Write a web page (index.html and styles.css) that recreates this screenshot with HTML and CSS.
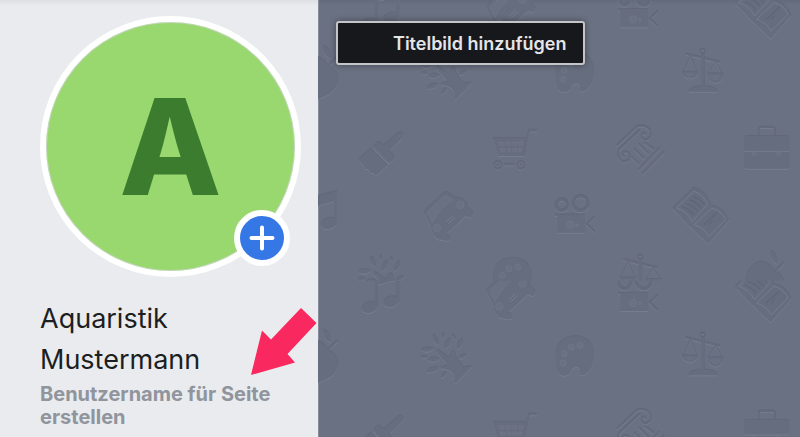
FILE: index.html
```html
<!DOCTYPE html>
<html lang="de">
<head>
    <meta charset="UTF-8">
    <title>Aquaristik Mustermann</title>
    <meta name="viewport" content="width=device-width, initial-scale=1.0">
    <link rel="stylesheet" href="styles.css">
</head>
<body>
<div class="page">
    <aside class="sidebar">
        <div class="avatar">
            <span class="avatar-letter">A</span>
            <button class="avatar-add" aria-label="Profilbild hinzufügen">
                <svg width="26" height="26" viewBox="0 0 26 26">
                    <path d="M13 2.500V23.500M2.500 13H23.500" stroke="#fff" stroke-width="4" stroke-linecap="round"/>
                </svg>
            </button>
        </div>
        <h1>Aquaristik Mustermann</h1>
        <a class="username" href="#">Benutzername für Seite erstellen</a>
        <svg class="arrow" width="66" height="67" viewBox="0 0 66 67">
            <path d="M50 0L65.500 15L36.500 46L44 54.500L0 67L11 22.500L20 31.500Z" fill="#f9285f"/>
        </svg>
    </aside>

    <main class="cover">
        <svg class="pattern" viewBox="0 0 1446 1311" preserveAspectRatio="xMinYMin slice" aria-hidden="true">
            <defs>
                <!-- the pattern tile repeats at y = 842 -->
                <clipPath id="tile-top"><rect x="-100" y="-100" width="4000" height="942"/></clipPath>
                <clipPath id="tile-bottom"><rect x="-100" y="842" width="4000" height="3000"/></clipPath>

                <path id="leaf" d="M-19 0Q-4 -14 19 0Q0 14 -19 0Z"/>

                <g id="brush">
                    <path d="M166 109L176 98Q183 93 188 98L197 106L237 70Q247 63 254 70Q259 78 250 86L215 121L228 140Q230 148 224 152L214 158Z"/>
                    <path d="M120 150L159 115L208 165L174 197L166 189L157 189L152 178L142 176L136 164Z"/>
                    <circle class="hole" cx="245" cy="77" r="3"/>
                    <path class="line" d="M163 112L211 161"/>
                </g>

                <g id="cart">
                    <path class="thick" d="M657 62H633L617 138"/>
                    <path d="M524 84H626L616 138H541Z"/>
                    <path class="hole edge" d="M541 96H556L559 106H544ZM564 96H577V106H567ZM584 96H597L596 106H584ZM604 96H616L613 106H603ZM546 115H560L562 124H549ZM568 115H577V124H570ZM584 115H596L595 124H584ZM602 115H612L609 124H601Z"/>
                    <circle class="ring" cx="540" cy="166" r="11"/>
                    <circle class="ring" cx="609" cy="166" r="11"/>
                    <circle cx="540" cy="166" r="4"/>
                    <circle cx="609" cy="166" r="4"/>
                    <path class="thick" d="M559 164H589"/>
                </g>

                <g id="note">
                    <path d="M-17 262L57 242V340H48V274L-8 289V357H-17Z"/>
                    <ellipse cx="33" cy="340" rx="24" ry="16" transform="rotate(-15 33 340)"/>
                    <ellipse cx="-32" cy="357" rx="24" ry="16" transform="rotate(-15 -32 357)"/>
                </g>

                <g id="car">
                    <path d="M378 248Q386 243 394 250L412 263Q428 260 440 272Q452 283 450 293L465 308Q466 318 457 323L443 318L384 371Q398 379 396 388Q388 396 378 391L360 388Q342 378 340 352L320 314Q316 306 322 300Z"/>
                    <path class="hole edge" d="M328 307L380 257L405 269Q366 292 344 338Z"/>
                    <circle class="hole edge" cx="427" cy="285" r="11"/>
                    <circle class="hole edge" cx="357" cy="354" r="11"/>
                    <path class="line" d="M385 335L406 316M391 341L412 322"/>
                </g>

                <g id="camera">
                    <circle class="ring wide" cx="65" cy="285" r="17"/>
                    <circle class="ring wide" cx="122" cy="280" r="22"/>
                    <path d="M45 313H135V368H53V318H45Z"/>
                    <path class="ring" d="M164 320L140 343L164 365"/>
                    <circle class="hole edge" cx="90" cy="344" r="11"/>
                    <circle class="hole edge" cx="111" cy="345" r="4"/>
                </g>

                <g id="column">
                    <path class="ring" d="M230 107L290 50Q315 41 331 62Q337 84 318 90Q300 88 306 72Q313 66 318 75"/>
                    <path class="ring" d="M300 60L236 120Q228 140 247 155Q270 158 270 135Q262 120 249 128Q245 137 254 140"/>
                    <path class="thick" d="M274 140L298 164M283 117L311 145M296 102L327 132M312 97L343 119"/>
                    <path class="thick" d="M295 181L358 115M307 192L373 125"/>
                </g>

                <g id="briefcase">
                    <rect class="ring" x="656" y="52" width="49" height="30" rx="8"/>
                    <rect x="612" y="78" width="136" height="98" rx="8"/>
                    <path class="line" d="M612 124H748"/>
                    <circle class="hole edge" cx="642" cy="130" r="6"/>
                    <circle class="hole edge" cx="716" cy="130" r="6"/>
                </g>

                <g id="book">
                    <path d="M397 295L462 232Q500 244 513 285Q550 292 567 331L505 402L450 350Z"/>
                    <path class="line" d="M409 294L462 244Q490 254 503 283L456 334Q443 304 409 294ZM515 294Q544 301 557 329L506 380Q495 355 463 344Z"/>
                    <path class="text" d="M427 291Q448 296 461 315M437 280Q460 286 473 304M449 270Q470 276 484 294M460 260Q480 266 493 283M491 345L532 307M506 344L517 333"/>
                </g>

                <g id="scales">
                    <circle class="ring" cx="488" cy="286" r="7"/>
                    <path d="M483 294H494V388Q528 390 533 406H445Q450 390 483 388Z"/>
                    <path class="thick" d="M437 293L540 318"/>
                    <path class="ring thin" d="M450 300L430 348M452 300L471 348M526 318L506 352M528 318L546 352"/>
                    <path d="M425 346H474Q471 365 449 366Q428 364 425 346ZM502 351H551Q549 377 526 380Q505 377 502 351Z"/>
                    <path class="hole" d="M434 351H466Q460 361 449 361Q439 360 434 351ZM509 356H543Q538 372 526 374Q514 372 509 356Z"/>
                </g>

                <g id="palette">
                    <path d="M46 350Q46 292 108 288Q160 292 162 345Q160 392 130 406L121 404Q123 380 108 380Q97 382 90 400Q72 415 55 400Q46 380 46 350Z"/>
                    <circle class="hole edge" cx="120" cy="316" r="9"/>
                    <circle class="hole edge" cx="94" cy="321" r="9"/>
                    <circle class="hole edge" cx="73" cy="341" r="9"/>
                    <circle class="hole edge" cx="69" cy="369" r="9"/>
                </g>

                <g id="tree">
                    <path d="M357 328L393 352L401 334H410L415 352L436 380L464 377L412 430Q414 397 390 390L367 384L389 374L356 338Z"/>
                    <use href="#leaf" transform="translate(353 299) rotate(65)"/>
                    <use href="#leaf" transform="translate(376 286) rotate(90) scale(.500)"/>
                    <use href="#leaf" transform="translate(388 311) rotate(115)"/>
                    <use href="#leaf" transform="translate(408 291) rotate(60) scale(.500)"/>
                    <use href="#leaf" transform="translate(426 311) rotate(115)"/>
                    <use href="#leaf" transform="translate(434 349) rotate(-30) scale(.700)"/>
                    <use href="#leaf" transform="translate(328 328) rotate(-5)"/>
                    <use href="#leaf" transform="translate(319 351) scale(.600)"/>
                    <use href="#leaf" transform="translate(348 358) rotate(-5)"/>
                    <use href="#leaf" transform="translate(344 389) rotate(-20)"/>
                    <use href="#leaf" transform="translate(378 404) rotate(-50) scale(.700)"/>
                </g>

                <g id="apple">
                    <path d="M-60 360Q-50 302 -10 300Q15 303 30 327Q62 348 62 375Q50 415 0 427Q-60 420 -60 360Z"/>
                    <use href="#leaf" transform="translate(27 287) rotate(62) scale(1.200)"/>
                    <path class="thick" d="M34 326L58 302"/>
                </g>
            </defs>

            <g clip-path="url(#tile-top)">
                <use class="icon" href="#note" x="187" y="-286"/>
                <use class="icon" href="#car" x="187" y="-286"/>
                <use class="icon" href="#camera" x="855" y="-286"/>
                <use class="icon" href="#book" x="853" y="-286"/>
                <use class="icon" href="#apple" y="-131"/>
                <use class="icon" href="#tree" y="-131"/>
                <use class="icon" href="#palette" x="666" y="-131"/>
                <use class="icon" href="#scales" x="666" y="-131"/>
                <use class="icon" href="#brush" y="330"/>
                <use class="icon" href="#cart" y="330"/>
                <use class="icon" href="#column" x="666" y="330"/>
                <use class="icon" href="#briefcase" x="666" y="330"/>
                <use class="icon" href="#note" y="330"/>
                <use class="icon" href="#car" y="330"/>
                <use class="icon" href="#camera" x="666" y="330"/>
                <use class="icon" href="#book" x="666" y="330"/>
                <use class="icon" href="#tree" x="-188" y="486"/>
                <use class="icon" href="#palette" x="479" y="485"/>
                <use class="icon" href="#scales" x="479" y="486"/>
                <use class="icon" href="#apple" x="1341" y="485"/>
            </g>

            <g clip-path="url(#tile-bottom)">
                <use class="icon" href="#note" x="187" y="565"/>
                <use class="icon" href="#car" x="187" y="565"/>
                <use class="icon" href="#camera" x="855" y="565"/>
                <use class="icon" href="#book" x="853" y="565"/>
                <use class="icon" href="#apple" y="720"/>
                <use class="icon" href="#tree" y="720"/>
                <use class="icon" href="#palette" x="666" y="720"/>
                <use class="icon" href="#scales" x="666" y="720"/>
                <use class="icon" href="#brush" y="1181"/>
                <use class="icon" href="#cart" y="1181"/>
                <use class="icon" href="#column" x="666" y="1181"/>
                <use class="icon" href="#briefcase" x="666" y="1181"/>
            </g>
        </svg>
        <button class="cover-button">Titelbild hinzufügen</button>
    </main>
</div>
</body>
</html>
```

FILE: styles.css
```css
* {
    box-sizing: border-box;
}

body {
    margin: 0;
    font-family: Inter, "Liberation Sans", Arial, sans-serif;
    background: #e9ebee;
    color: #1c1e21;
}

.page {
    display: flex;
    min-height: 100vh;
    overflow: hidden;
}

.sidebar {
    position: relative;
    flex: 0 0 318px;
    padding: 16px 16px 8px 40px;
    background: linear-gradient(#dddfe2 0, #e9ebee 6px);
}

.avatar {
    position: relative;
    display: flex;
    align-items: center;
    justify-content: center;
    width: 261px;
    height: 261px;
    border: 6px solid #fff;
    border-radius: 50%;
    background: #98d86f;
    box-shadow: inset 0 0 0 1px #c9d3c6;
}

.avatar-letter {
    color: #3b7c2f;
    font-size: 133px;
    font-weight: 800;
    line-height: 1;
}

.avatar-add {
    position: absolute;
    right: 5px;
    bottom: 5px;
    display: flex;
    align-items: center;
    justify-content: center;
    width: 56px;
    height: 56px;
    padding: 0;
    border: 6px solid #fff;
    border-radius: 50%;
    background: #3578e5;
    cursor: pointer;
}

h1 {
    margin: 21px 0 0;
    font-size: 27px;
    font-weight: 400;
    line-height: 41px;
}

.username {
    display: block;
    margin-top: 3px;
    color: #90949c;
    font-size: 20px;
    font-weight: 700;
    line-height: 23px;
    text-decoration: none;
}

.arrow {
    position: absolute;
    top: 308px;
    right: 1px;
}

.cover {
    position: relative;
    flex: 1;
    padding: 21px 17px;
    border-left: 1px solid #868b99;
    background: linear-gradient(#636a7b 0, #6a7182 5px);
}

.pattern {
    position: absolute;
    top: 0;
    left: -1px;
    width: calc(100% + 1px);
    height: 100%;
}

.icon {
    fill: #666d7e;
    stroke: none;
    filter: drop-shadow(0 -2px 0 #5e6576) drop-shadow(0 3px 0 #767d8e);
}

.hole {
    fill: #6a7182;
}

.hole.edge {
    stroke: #727989;
    stroke-width: 2;
}

.line {
    fill: none;
    stroke: #757c8d;
    stroke-width: 3;
}

.text {
    fill: none;
    stroke: #5f6677;
    stroke-width: 4;
}

.ring {
    fill: none;
    stroke: #646b7c;
    stroke-width: 4;
}

.ring.wide {
    stroke-width: 8;
}

.ring.thin {
    stroke-width: 2;
}

.thick {
    fill: none;
    stroke: #666d7e;
    stroke-width: 5;
}

.cover-button {
    position: relative;
    height: 44px;
    padding: 0 17px 0 55px;
    border: 2px solid #c4c5c8;
    border-radius: 3px;
    background: #16181c;
    box-shadow: 0 0 6px rgba(0, 0, 0, 0.4);
    color: #e4e5e8;
    font-family: inherit;
    font-size: 18px;
    font-weight: 600;
    cursor: pointer;
}
```
